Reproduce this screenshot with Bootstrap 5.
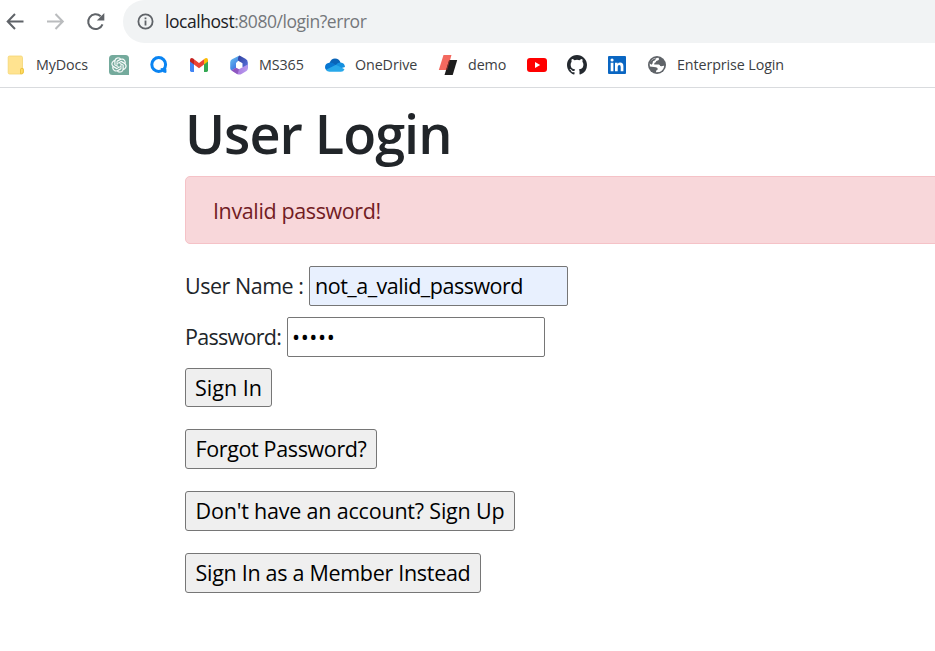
<!DOCTYPE html>
<html lang="en">
<head>
<meta charset="utf-8">
<meta name="viewport" content="width=device-width, initial-scale=1">
<title>User Login</title>
<link href="https://cdn.jsdelivr.net/npm/bootstrap@5.3.0/dist/css/bootstrap.min.css" rel="stylesheet">
<style>
body{font-family:"Open Sans","Noto Sans",sans-serif;background:#fff;overflow:hidden;height:651px}
svg{display:block;flex:none}
.toolbar-row{height:43px;padding-left:5px}
.nav-icons{width:118px;gap:20px}
.address{height:43px;background:#f1f3f4;border-radius:22px 0 0 22px;padding-left:14px;font-size:17.5px;color:#74777b;letter-spacing:-.46px}
.address span{color:#202124}
.url-text{margin-left:11px}
.bookmarks{height:45px;border-bottom:1px solid #d9dbde;padding-left:6px;gap:20px;font-size:14.3px;color:#3c4043;letter-spacing:-.1px}
.bookmark{gap:10px;white-space:nowrap}
.w-docs{width:53px}.w-ms{width:46px}.w-drive{width:63px}.w-demo{width:39px}
.page{padding-left:185px;font-size:21.5px;color:#212529}
.page h1{font-size:54px;font-weight:600;line-height:64px;margin:13px 0 11px;letter-spacing:-1px;white-space:nowrap}
.page .alert{width:780px;height:68px;padding:2px 27px 0;margin-bottom:22px;background:#f8d7da;border-color:#f5c2c7;color:#721c24;border-radius:5px;letter-spacing:-.38px}
.field{height:40px;margin-bottom:11px}
.field input{width:259px;height:40px;border:1px solid #767676;border-radius:2px;padding:0 5px 2px;color:#000;outline:0;letter-spacing:-.49px}
.field .filled{background:#e8f0fe}
.field #pass{width:258px;letter-spacing:.6px;padding-left:4px}
.lbl-user{width:124px;white-space:nowrap;letter-spacing:-.48px}
.lbl-pass{width:102px;white-space:nowrap;letter-spacing:-.7px}
.plain{border:1px solid #767676;border-radius:3px;background:#efefef;color:#000;height:40px;padding:1px 0 0;display:block;white-space:nowrap;margin-bottom:22px}
.b-sign{width:87px;height:39px}
.b-forgot{width:192px;letter-spacing:-.36px}
.b-up{width:330px;letter-spacing:-.2px}
.b-member{width:296px;letter-spacing:-.3px}
</style>
<script src="https://cdn.jsdelivr.net/npm/bootstrap@5.3.0/dist/js/bootstrap.bundle.min.js"></script>
</head>
<body>
<header>
<div class="toolbar-row d-flex">
  <div class="nav-icons d-flex align-items-center">
    <svg width="20" height="20" viewBox="0 0 20 20" fill="none" stroke="#5f6368" stroke-width="2"><path d="M18.500 9.500H4M10 2 2.700 9.500l7.300 7.500"/></svg>
    <svg width="20" height="20" viewBox="0 0 20 20" fill="none" stroke="#babcbe" stroke-width="2"><path d="M2 9.500h14.500M10.500 2l7.300 7.500-7.300 7.500"/></svg>
    <svg width="20" height="20" viewBox="0 0 20 20"><path d="M17.500 12.300A7.400 7.400 0 1 1 15.700 4.300" fill="none" stroke="#5f6368" stroke-width="2"/><path d="M19.300 1v7.500h-7.500z" fill="#5f6368"/></svg>
  </div>
  <div class="address flex-grow-1 d-flex align-items-center">
    <svg width="17" height="17" viewBox="0 0 17 17"><circle cx="8.500" cy="8.500" r="7.100" fill="none" stroke="#5f6368" stroke-width="1.800"/><path d="M7.600 7.600h1.800v5H7.600zM7.600 4.400h1.800v1.800H7.600z" fill="#5f6368"/></svg>
    <div class="url-text"><span>localhost</span>:8080/login?error</div>
  </div>
</div>
<nav class="bookmarks d-flex align-items-center" aria-label="Bookmarks">
  <div class="bookmark d-flex align-items-center">
    <svg width="20" height="20" viewBox="0 0 20 20"><path d="M3.500 1h11.400q1.600 0 1.600 1.600V13l1 1v3q0 2-2 2h-12q-1.300 0-1.300-1.300V2.300Q2.200 1 3.500 1z" fill="#ffe390" stroke="#f4d574" stroke-width=".8"/><path d="M14.500 18.700v-4q0-1.400 1.400-1.400t1.400 1.400v2.200q0 1.800-1.700 1.800z" fill="#ffdc62" stroke="#e9bd35" stroke-width=".8"/></svg>
    <span class="w-docs">MyDocs</span>
  </div>
  <svg width="20" height="20" viewBox="0 0 20 20"><path d="M3.500 0h13Q20 0 20 3.500V20H3.500Q0 20 0 16.500v-13Q0 0 3.500 0z" fill="#74aa9c"/><g transform="translate(2.400 2.400) scale(.633)" fill="#fff" stroke="#fff" stroke-width=".3"><path d="M22.282 9.821a5.985 5.985 0 0 0-.516-4.910 6.046 6.046 0 0 0-6.510-2.900A6.065 6.065 0 0 0 4.981 4.182a5.985 5.985 0 0 0-3.998 2.900 6.046 6.046 0 0 0 .743 7.097 5.980 5.980 0 0 0 .511 4.911 6.051 6.051 0 0 0 6.515 2.900A5.985 5.985 0 0 0 13.260 24a6.056 6.056 0 0 0 5.772-4.206 5.990 5.990 0 0 0 3.998-2.900 6.056 6.056 0 0 0-.747-7.073zM13.260 22.430a4.476 4.476 0 0 1-2.876-1.041l.142-.080 4.778-2.758a.795.795 0 0 0 .393-.681v-6.737l2.020 1.169a.071.071 0 0 1 .038.052v5.583a4.504 4.504 0 0 1-4.495 4.493zM3.600 18.304a4.471 4.471 0 0 1-.535-3.014l.142.085 4.783 2.759a.771.771 0 0 0 .780 0l5.843-3.369v2.332a.080.080 0 0 1-.033.062L9.740 19.950a4.499 4.499 0 0 1-6.140-1.646zM2.341 7.896a4.485 4.485 0 0 1 2.366-1.973V11.600a.766.766 0 0 0 .388.677l5.814 3.354-2.020 1.169a.076.076 0 0 1-.071 0l-4.830-2.787A4.504 4.504 0 0 1 2.341 7.872zm16.596 3.856-5.833-3.388L15.119 7.200a.076.076 0 0 1 .071 0l4.830 2.791a4.494 4.494 0 0 1-.676 8.105v-5.678a.790.790 0 0 0-.407-.667zm2.011-3.024-.142-.085-4.774-2.782a.776.776 0 0 0-.785 0L9.409 9.230V6.898a.066.066 0 0 1 .028-.062l4.830-2.786a4.499 4.499 0 0 1 6.681 4.660zM8.307 12.863l-2.020-1.164a.080.080 0 0 1-.038-.057V6.075a4.499 4.499 0 0 1 7.376-3.454l-.142.081L8.704 5.460a.795.795 0 0 0-.393.681zm1.097-2.365 2.602-1.500 2.607 1.500v2.999l-2.597 1.500-2.607-1.500z"/></g></svg>
  <svg width="20" height="20" viewBox="0 0 20 20"><circle cx="9.700" cy="9.500" r="6.900" fill="none" stroke="#0a84f2" stroke-width="3"/><path d="m11.400 13 2.600 4.200 2.500.8 1-.8-.2-3.500z" fill="#0a84f2"/></svg>
  <svg width="20" height="20" viewBox="0 0 20 20"><path d="M1 5v10.600q0 1.400 1.400 1.400H5V8z" fill="#4285f4"/><path d="M15 8v9h2.600q1.400 0 1.400-1.400V5z" fill="#34a853"/><path d="M5 4.300v5.200l5 3.800 5-3.800V4.300l-5 3.800z" fill="#ea4335"/><path d="M15 4.300v5.200l4-3V5q0-1.900-1.800-2-.8 0-1.400.6z" fill="#fbbc04"/><path d="M5 4.300v5.200l-4-3V5q0-1.900 1.800-2 .8 0 1.400.6z" fill="#c5221f"/></svg>
  <div class="bookmark d-flex align-items-center">
    <svg width="20" height="20" viewBox="0 0 20 20"><defs><linearGradient id="ma" x2=".6" y2="1"><stop stop-color="#6ac8f2"/><stop offset="1" stop-color="#3a6fe0"/></linearGradient><linearGradient id="mb" x2="1"><stop stop-color="#a66fd6"/><stop offset="1" stop-color="#b79af0"/></linearGradient><linearGradient id="mc" x2="1" y2="1"><stop stop-color="#2f3f9c"/><stop offset="1" stop-color="#5a74e0"/></linearGradient></defs><path d="M10.500.500 3 4.300Q1.200 5.300 1.200 7.300v6q0 1.500 1.300 2.200L7 13V8l3-3z" fill="url(#ma)"/><path d="m10.500.500 5.900 3.300q2.400 1.300 2.400 3.600v6.200L13.500 12V8.200L9.200 5.800q-.8-3.500 1.300-5.300z" fill="url(#mc)"/><path d="m18.800 9.500v4.200q0 1.400-1.300 2.200l-5 3q-2.200 1.200-4.500 0l-5.500-3.400L7 12.800l3 1.500 3.500-2.100z" fill="url(#mb)"/><path d="M2.500 15.500 7 12.800l3 1.500-1.500 4.900-.5-.3z" fill="#7b3fae" opacity=".6"/></svg>
    <span class="w-ms">MS365</span>
  </div>
  <div class="bookmark d-flex align-items-center">
    <svg width="20" height="20" viewBox="0 0 20 20"><path d="M4.500 8Q6.300 3.600 10 3.600q4 0 5.500 4L12 12H4z" fill="#0a64b8"/><path d="M4.300 7.700Q6 7 7.800 8l7 5-11.500 3Q0 15.200 0 12q.3-4 4.300-4.300z" fill="#0877d2"/><path d="M11 9.800q1.600-2.300 4.600-2.200 4 .4 4.400 4.500l-5 1.500z" fill="#1590df"/><path d="M1 14.800 11 9.800l8.500 4.500q-1 2.500-3.600 2.500H4.500q-2.300 0-3.500-2z" fill="#28a8ea"/></svg>
    <span class="w-drive">OneDrive</span>
  </div>
  <div class="bookmark d-flex align-items-center">
    <svg width="20" height="20" viewBox="0 0 20 20"><path d="M5.500 0h8l-4.300 15H.8z" fill="#f3695f"/><path d="M11.200 5h8l-4.500 15H6.500z" fill="#1d1d1d"/><path d="M11.200 5h.9l-3 10h-.9z" fill="#8e302a"/></svg>
    <span class="w-demo">demo</span>
  </div>
  <svg width="20" height="20" viewBox="0 0 20 20"><rect y="3" width="20" height="14" rx="3" fill="#f00"/><path d="m8 7 5.200 3L8 13z" fill="#fff"/></svg>
  <svg width="20" height="20" viewBox="0 0 16 16"><path fill="#24292f" d="M8 0C3.580 0 0 3.580 0 8c0 3.540 2.290 6.530 5.470 7.590.4.070.55-.17.55-.38 0-.19-.010-.82-.010-1.490-2.010.37-2.530-.49-2.690-.94-.090-.23-.48-.94-.82-1.130-.28-.15-.68-.52-.010-.53.63-.010 1.080.58 1.230.82.72 1.210 1.870.87 2.330.66.070-.52.28-.87.51-1.070-1.780-.2-3.640-.89-3.640-3.950 0-.87.31-1.590.82-2.150-.080-.2-.36-1.020.080-2.120 0 0 .67-.21 2.200.82a7.600 7.600 0 0 1 4 0c1.530-1.040 2.200-.82 2.200-.82.44 1.100.16 1.920.080 2.120.51.56.82 1.270.82 2.150 0 3.070-1.870 3.750-3.650 3.950.29.25.54.73.54 1.480 0 1.070-.010 1.930-.010 2.200 0 .21.15.46.55.38A8.010 8.010 0 0 0 16 8c0-4.420-3.580-8-8-8z"/></svg>
  <svg width="20" height="20" viewBox="0 0 20 20"><rect x="1" y="1" width="18" height="18" rx="1" fill="#0a66c2"/><path d="M3.700 7.800h2.700v8.500H3.700zM8 7.800h2.600V9q.8-1.400 2.600-1.400 3.200 0 3.200 3.700v5h-2.700v-4.400q0-2-1.400-2-1.600 0-1.600 2.100v4.300H8z" fill="#fff"/><circle cx="5.050" cy="5" r="1.550" fill="#fff"/></svg>
  <div class="bookmark d-flex align-items-center">
    <svg width="20" height="20" viewBox="0 0 20 20"><circle cx="10" cy="10" r="9" fill="#5f6368"/><path d="M11.500 2.800q1.400 1.500-.2 2.500l-2 .8q-.2 1.500-1.900 1.900l-.2 1.400h4.500q1.300.2 1.500 1.700l1.400.2q1.300-.7 2.600-.5-.6 4.600-4.600 6.100l-3.600.3.200-1.700q1.300-.5 1.600-1.600-.3-1.500-2-1.700l-5.900-.8-.2-2.800Q3.500 5 7 3.300z" fill="#fff"/><path d="M2.500 8.200Q4 4 9.500 2.900L8 5.200l-2 1-.5 2.200-1 1.400z" fill="#5f6368"/></svg>
    <span class="w-enterprise">Enterprise Login</span>
  </div>
</nav>
</header>
<main class="page">
  <h1>User Login</h1>
  <div class="alert alert-danger d-flex align-items-center"><span>Invalid password!</span></div>
  <form>
    <div class="field d-flex align-items-center"><label for="user" class="lbl-user">User Name :</label><input id="user" class="filled" type="text" value="not_a_valid_password"></div>
    <div class="field d-flex align-items-center"><label for="pass" class="lbl-pass">Password:</label><input id="pass" type="password" value="12345"></div>
    <button type="button" class="plain b-sign">Sign In</button>
    <button type="button" class="plain b-forgot">Forgot Password?</button>
    <button type="button" class="plain b-up">Don't have an account? Sign Up</button>
    <button type="button" class="plain b-member">Sign In as a Member Instead</button>
  </form>
</main>
</body>
</html>
